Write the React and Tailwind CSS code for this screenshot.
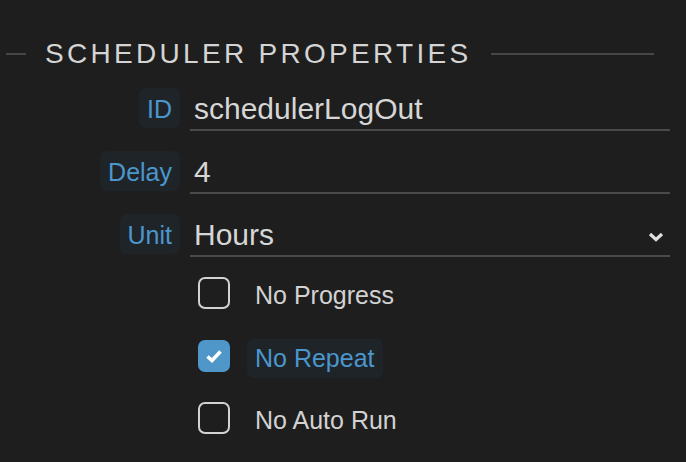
import React from "react";

const font = { fontFamily: '"Liberation Sans", Arial, sans-serif' };

function Field({ label, children, chevron }) {
  return (
    <div className="flex items-start">
      <div className="w-[180px] flex justify-end shrink-0">
        <div className="h-10 px-2 pt-[3px] leading-[37px] text-[25px] text-[#4b97cd] bg-[#1f2429] rounded-[7px]">
          {label}
        </div>
      </div>
      <div className="ml-[10px] flex-1 h-[43px] border-b-2 border-[#4a4a4a] flex items-start justify-between">
        <span className="text-[30px] leading-[41px] text-[#d6d6d6] pl-[4px]">{children}</span>
        {chevron && (
          <svg width="16" height="10" viewBox="0 0 16 10" className="mt-[18px] mr-[6px]">
            <path d="M2 2 L8 7.5 L14 2" fill="none" stroke="#dedede" strokeWidth="3.2" />
          </svg>
        )}
      </div>
    </div>
  );
}

function Check({ label, checked }) {
  return (
    <div className="flex items-start h-[39px]">
      {checked ? (
        <div className="mt-[1px] w-8 h-8 rounded-[7px] bg-[#4f97c9] flex items-center justify-center">
          <svg width="32" height="32" viewBox="0 0 32 32">
            <path d="M9.5 16.5 L14 20.5 L22.5 11.5" fill="none" stroke="#ffffff" strokeWidth="3.6" />
          </svg>
        </div>
      ) : (
        <div className="mt-[1px] w-8 h-8 rounded-[7px] border-2 border-[#d2d2d2]" />
      )}
      <div
        className={
          "ml-[17px] h-[39px] px-2 leading-[39px] text-[25px] rounded-[7px] " +
          (checked ? "bg-[#1f2429] text-[#4b97cd]" : "text-[#d2d2d2]")
        }
      >
        {label}
      </div>
    </div>
  );
}

export default function App() {
  return (
    <div className="w-[686px] h-[462px] bg-[#1e1e1e] overflow-hidden" style={font}>
      <div className="pt-[38px] pl-[6px] pr-[32px] flex items-center">
        <div className="w-5 h-[2px] bg-[#474747]" />
        <div className="ml-[19px] text-[28px] leading-[32px] tracking-[3.3px] text-[#d4d4d4] whitespace-nowrap">
          SCHEDULER PROPERTIES
        </div>
        <div className="ml-[20px] flex-1 h-[2px] bg-[#474747]" />
      </div>
      <div className="mt-[18px] pr-4 flex flex-col gap-5">
        <Field label="ID">schedulerLogOut</Field>
        <Field label="Delay">4</Field>
        <Field label="Unit" chevron>
          Hours
        </Field>
      </div>
      <div className="mt-[19px] pl-[198px] flex flex-col gap-[23.5px]">
        <Check label="No Progress" />
        <Check label="No Repeat" checked />
        <Check label="No Auto Run" />
      </div>
    </div>
  );
}
